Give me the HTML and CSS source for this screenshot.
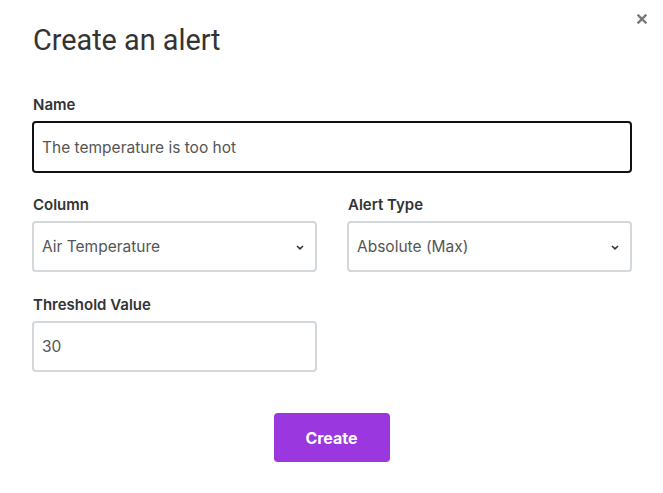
FILE: index.html
```html
<!DOCTYPE html>
<html>
<head>
<meta charset="utf-8">
<link rel="stylesheet" href="styles.css">
</head>
<body>
<div class="modal">
  <button class="close" aria-label="Close">
    <svg width="10" height="10" viewBox="0 0 10 10"><path d="M1.5 1.5L8.5 8.5M8.5 1.5L1.5 8.5" stroke="#777" stroke-width="2.4" stroke-linecap="square"/></svg>
  </button>
  <h1 class="title">Create an alert</h1>
  <form class="form">
    <div class="field">
      <label class="label">Name</label>
      <div class="input tall focused">The temperature is too hot</div>
    </div>
    <div class="row">
      <div class="field">
        <label class="label">Column</label>
        <div class="input select"><span>Air Temperature</span>
          <svg class="chev" width="8" height="5" viewBox="0 0 8 5"><path d="M1 1L4 3.8L7 1" stroke="#333" stroke-width="1.6" fill="none"/></svg>
        </div>
      </div>
      <div class="field">
        <label class="label">Alert Type</label>
        <div class="input select"><span>Absolute (Max)</span>
          <svg class="chev" width="8" height="5" viewBox="0 0 8 5"><path d="M1 1L4 3.8L7 1" stroke="#333" stroke-width="1.6" fill="none"/></svg>
        </div>
      </div>
    </div>
    <div class="row">
      <div class="field">
        <label class="label">Threshold Value</label>
        <div class="input">30</div>
      </div>
      <div></div>
    </div>
    <div class="actions">
      <button type="button" class="btn">Create</button>
    </div>
  </form>
</div>
</body>
</html>
```
FILE: styles.css
```css
* { box-sizing: border-box; }
html, body { margin: 0; padding: 0; background: #fff; }
body { font-family: Inter, "Noto Sans", sans-serif; color: #333; }
.modal {
  position: relative;
  width: 663px;
  height: 493px;
  padding: 24px 31px 0 32px;
}
.close {
  position: absolute;
  top: 13px;
  right: 15px;
  width: 12px;
  height: 12px;
  padding: 0;
  border: 0;
  background: none;
  display: flex;
  align-items: center;
  justify-content: center;
}
.title {
  margin: 0 0 0 1px;
  font-family: Roboto, sans-serif;
  font-weight: 400;
  font-size: 28.8px;
  line-height: 32px;
  color: #333;
}
.form { margin-top: 39px; display: flex; flex-direction: column; gap: 22px; }
.row + .row { margin-top: 1px; }
.field { display: flex; flex-direction: column; gap: 6px; }
.label {
  font-size: 15px;
  font-weight: 600;
  line-height: 20px;
  color: #333;
  padding-left: 1px;
}
.row { display: grid; grid-template-columns: 285px 285px; gap: 30px; }
.input {
  height: 51px;
  border: 2px solid #d3d8dc;
  border-radius: 4px;
  padding: 0 11px 0 8px;
  display: flex;
  align-items: center;
  font-size: 15.5px;
  color: #555;
}
.input.tall { height: 52px; }
.input.focused { border-color: #111; }
.select { justify-content: space-between; }
.chev { margin-top: 1px; }
.actions { display: flex; justify-content: center; margin-top: 19px; padding-right: 1px; }
.btn {
  width: 116px;
  height: 49px;
  border: 0;
  border-radius: 4px;
  background: #9b37de;
  color: #fff;
  font-family: Inter, sans-serif;
  font-size: 16px;
  font-weight: 700;
}
```
